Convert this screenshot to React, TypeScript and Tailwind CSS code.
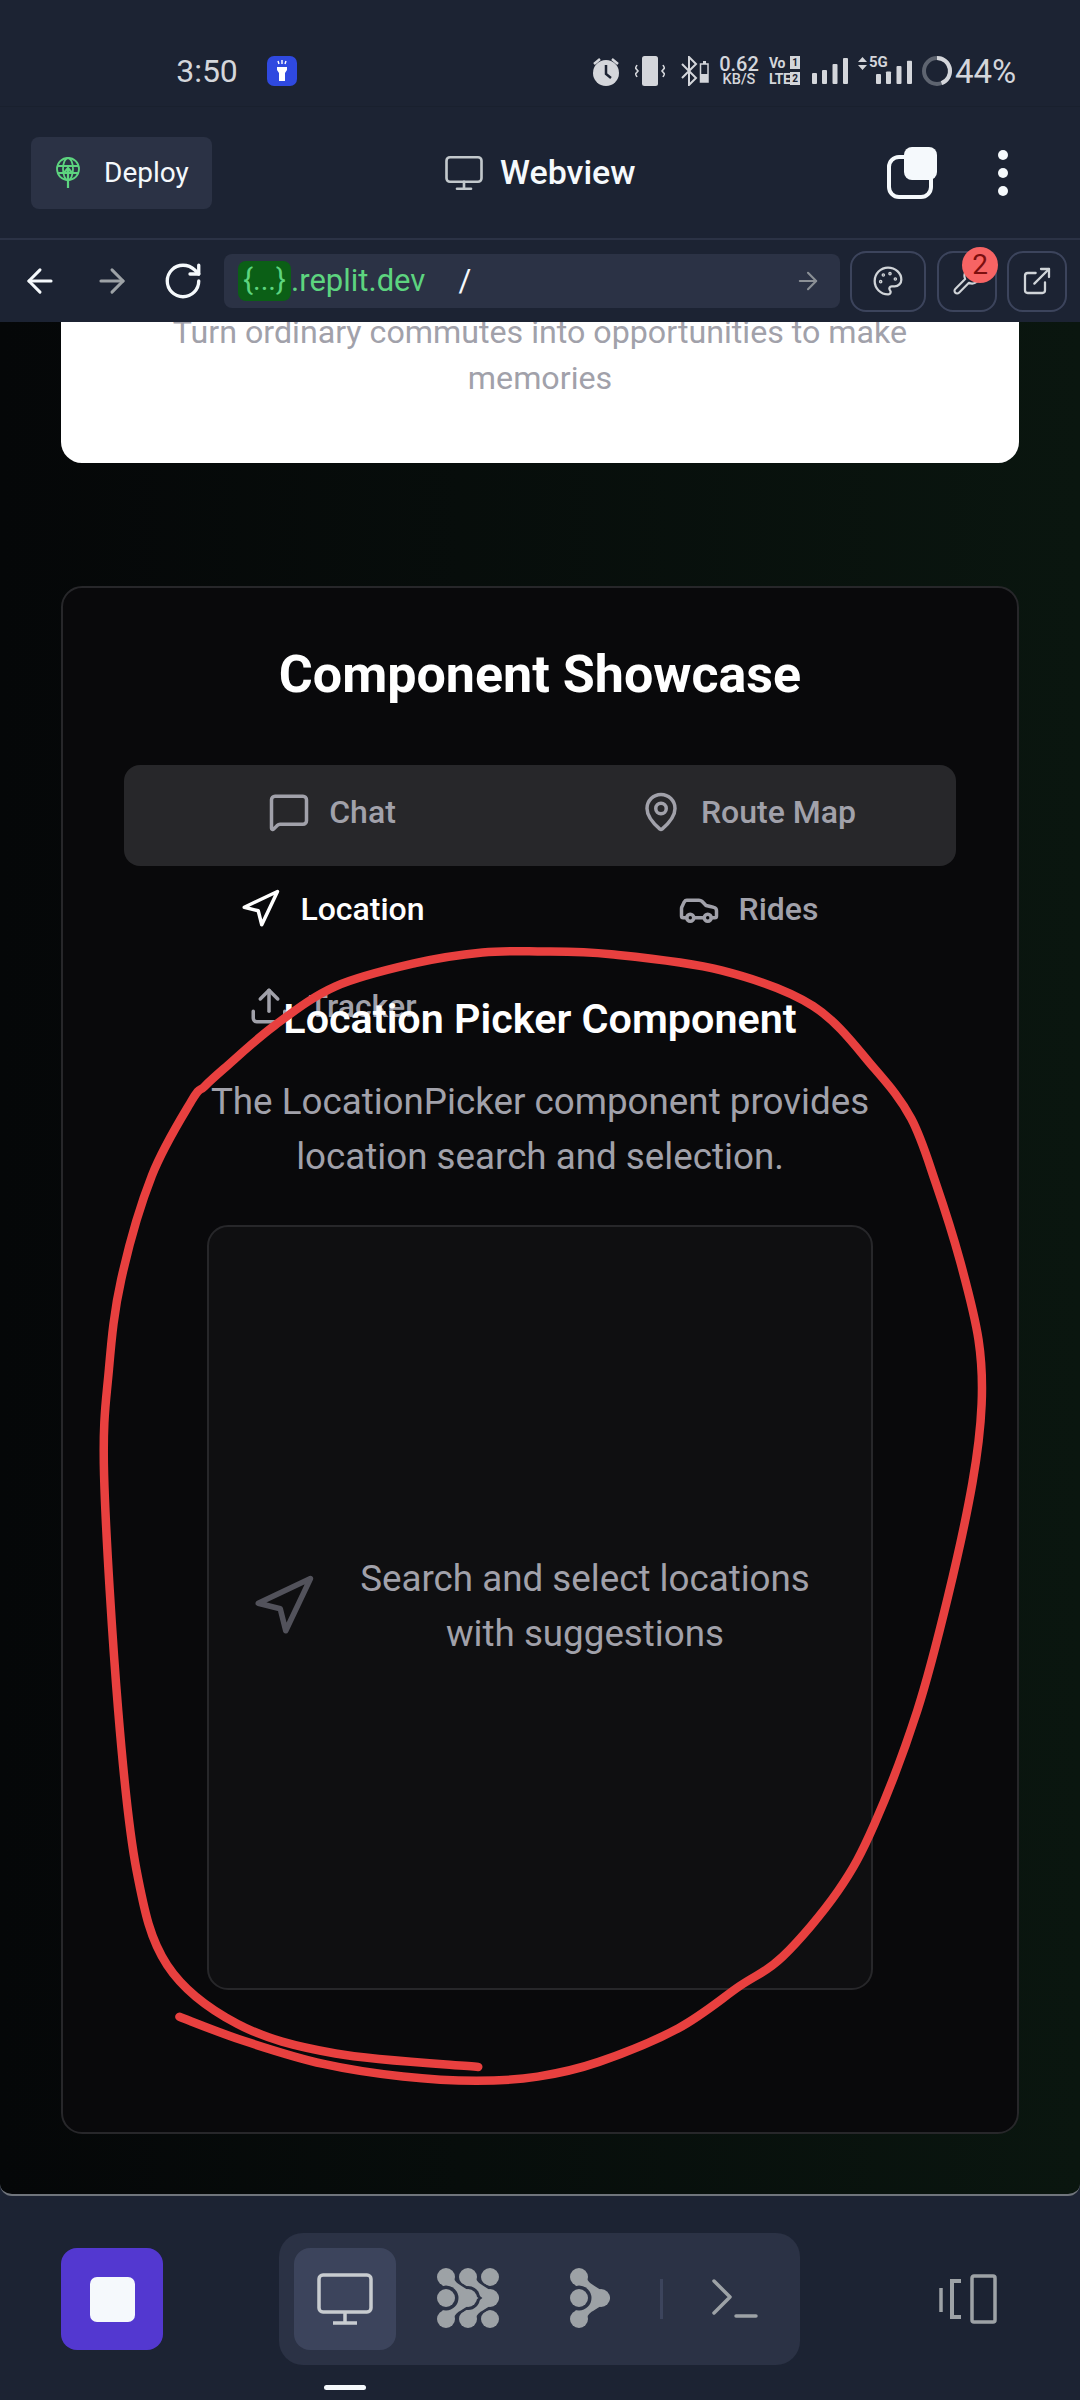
import React from "react";
import { ArrowLeft, ArrowRight, RotateCw, Palette, Wrench, ExternalLink, MessageSquare, MapPin, Navigation, Car, Upload, Monitor } from "lucide-react";

const top: [number, number][] = [[72,1500],[80,1200],[100,950],[150,660],[215,450],[236,410],[268,360],[350,240],[450,130],[580,65],[690,35],[780,32],[900,40],[1080,85],[1230,185],[1330,360],[1390,500],[1430,680],[1470,900],[1500,1120],[1505,1300],[1490,1520]];
const bot: [number, number][] = [[1450,230],[1400,500],[1330,770],[1270,930],[1180,1085],[1110,1155],[1010,1255],[880,1335],[780,1370],[680,1380],[560,1370],[430,1340],[300,1285],[195,1228]];
const start: [number, number][] = [[683,1347],[450,1315],[290,1245],[175,1105],[125,880],[95,500]];

const pts: [number, number][] = [
  ...start.map(([x, y]) => [60 + x / 1.633, 1500 + y / 2.376] as [number, number]),
  ...top.map(([x, y]) => [60 + x / 1.633, 940 + y / 2.8] as [number, number]),
  ...bot.map(([x, y]) => [60 + x / 1.633, 1500 + y / 2.376] as [number, number]),
];

function smooth(p: [number, number][]) {
  let d = `M${p[0][0]} ${p[0][1]}`;
  for (let i = 0; i < p.length - 1; i++) {
    const a = p[Math.max(0, i - 1)], b = p[i], c = p[i + 1], e = p[Math.min(p.length - 1, i + 2)];
    d += ` C${b[0] + (c[0] - a[0]) / 6} ${b[1] + (c[1] - a[1]) / 6} ${c[0] - (e[0] - b[0]) / 6} ${c[1] - (e[1] - b[1]) / 6} ${c[0]} ${c[1]}`;
  }
  return d;
}

function Bars() {
  return (
    <svg width="36" height="26" viewBox="0 0 36 26" fill="#d4d6db">
      <rect x="0" y="15" width="5" height="11" rx="1" />
      <rect x="10" y="12" width="5" height="14" rx="1" />
      <rect x="20.5" y="6" width="5" height="20" rx="1" />
      <rect x="31" y="0" width="5" height="26" rx="1" />
    </svg>
  );
}

function StatusBar() {
  return (
    <div className="h-[107px] shrink-0 border-b border-[#19202e] pt-[36px] pl-[175px] flex items-center text-[#d4d6db]">
      <span className="w-[64px] text-[32px] leading-none text-center">3:50</span>
      <div className="ml-[28px] w-[30px] h-[30px] rounded-[7px] bg-[#2f49e0] flex items-center justify-center">
        <svg width="16" height="24" viewBox="0 0 16 24" fill="#fff">
          <path d="M3 8h10v3l-2 3v8H5v-8L3 11z" />
          <path d="M8 1v4M4 2l1 3M12 2l-1 3" stroke="#fff" strokeWidth="1.4" />
        </svg>
      </div>
      <svg className="ml-[295px]" width="28" height="30" viewBox="0 0 28 30" fill="#d4d6db">
        <circle cx="14" cy="17" r="13" />
        <path d="M14 9v9l5 4" stroke="#1c2333" strokeWidth="2.5" fill="none" />
        <path d="M2 8l6-5M26 8l-6-5" stroke="#d4d6db" strokeWidth="2.5" />
      </svg>
      <svg className="ml-[15px]" width="30" height="30" viewBox="0 0 30 30">
        <rect x="7" y="0" width="16" height="30" rx="2.5" fill="#d4d6db" />
        <path d="M2 9l-1.500 3 2.500 3-2.500 3 1.500 3M28 9l1.500 3-2.500 3 2.500 3-1.500 3" stroke="#d4d6db" strokeWidth="1.600" fill="none" />
      </svg>
      <svg className="ml-[15px]" width="29" height="30" viewBox="0 0 29 30" fill="none">
        <path d="M2 8l14 14-7 7V1l7 7L2 22" stroke="#d4d6db" strokeWidth="2" />
        <rect x="20.500" y="8" width="7.500" height="18" stroke="#d4d6db" strokeWidth="1.500" />
        <rect x="20.500" y="18" width="7.500" height="8" fill="#d4d6db" />
        <rect x="23" y="5" width="3" height="3" fill="#d4d6db" />
      </svg>
      <div className="ml-[9px] w-[42px] flex flex-col items-center font-medium">
        <span className="text-[20px] leading-[17px]">0.62</span>
        <span className="text-[14.500px] leading-[13px]">KB/S</span>
      </div>
      <div className="ml-[9px] w-[31px] grid grid-cols-[21px_10px] text-[14px] font-bold leading-[14px] tracking-[-0.3px] gap-y-[2px]">
        <span>Vo</span>
        <span className="h-[13px] w-[10px] bg-[#d4d6db] text-[#1c2333] text-[10px] leading-[13px] text-center">1</span>
        <span>LTE</span>
        <span className="h-[13px] w-[10px] bg-[#d4d6db] text-[#1c2333] text-[10px] leading-[13px] text-center">2</span>
      </div>
      <div className="ml-[12px] flex"><Bars /></div>
      <svg className="ml-[10px] relative top-[-8px]" width="9" height="13" viewBox="0 0 9 13" fill="#d4d6db"><path d="M4.500 0L9 5H0zM4.500 13L0 8h9z" /></svg>
      <div className="ml-[2px] relative w-[42px] h-[30px]">
        <span className="absolute left-0 top-[-2px] text-[15px] font-bold leading-[16px]">5G</span>
        <div className="absolute right-[-1px] bottom-[2px] scale-y-[0.9] origin-bottom"><Bars /></div>
      </div>
      <svg className="ml-[10px]" width="32" height="32" viewBox="0 0 32 32" fill="none">
        <circle cx="16" cy="16" r="13" stroke="#5e6470" strokeWidth="4" />
        <path d="M16 3a13 13 0 0 1 4.500 25.200" stroke="#d4d6db" strokeWidth="4" />
      </svg>
      <span className="ml-[2px] text-[33px] leading-none">44%</span>
    </div>
  );
}

function HeaderRow() {
  return (
    <div className="h-[131px] shrink-0 flex items-center relative pl-[31px]">
      <div className="w-[181px] h-[72px] rounded-[8px] bg-[#2b3245] flex items-center pl-[25px] gap-[24px]">
        <svg width="24" height="31" viewBox="0 0 24 31" fill="none" stroke="#5dd47f" strokeWidth="1.800">
          <circle cx="12" cy="12" r="11" />
          <ellipse cx="12" cy="12" rx="5" ry="11" />
          <path d="M1 9h22M2 16h20" />
          <path d="M12 31V11M7 17l5-6 5 6" strokeWidth="2.200" />
        </svg>
        <span className="text-[28px] text-[#f5f9fc]">Deploy</span>
      </div>
      <div className="ml-[231px] flex items-center gap-[15px]">
        <Monitor size={42} color="#c2c8cc" strokeWidth={1.500} />
        <span className="text-[34px] font-medium text-[#f5f9fc]">Webview</span>
      </div>
      <svg className="ml-[251px]" width="50" height="52" viewBox="0 0 50 52" fill="none">
        <rect x="2" y="10" width="42" height="40" rx="10" stroke="#f5f9fc" strokeWidth="4" />
        <rect x="17" y="0" width="33" height="33" rx="8" fill="#f5f9fc" />
      </svg>
      <div className="ml-[61px] flex flex-col gap-[8px]">
        <span className="w-[10px] h-[10px] rounded-full bg-[#f5f9fc]" />
        <span className="w-[10px] h-[10px] rounded-full bg-[#f5f9fc]" />
        <span className="w-[10px] h-[10px] rounded-full bg-[#f5f9fc]" />
      </div>
    </div>
  );
}

function UrlRow() {
  return (
    <div className="h-[84px] shrink-0 border-t-2 border-[#2b3245] flex items-center pl-[21px]">
      <ArrowLeft size={38} color="#f5f9fc" strokeWidth={1.900} />
      <ArrowRight size={38} color="#9da2a6" strokeWidth={1.900} className="ml-[34px]" />
      <RotateCw size={42} color="#f5f9fc" strokeWidth={1.900} className="ml-[31px]" />
      <div className="ml-[20px] w-[616px] h-[54px] rounded-[8px] bg-[#2b3245] flex items-center pl-[14px] pr-[18px]">
        <span className="h-[40px] w-[53px] rounded-[8px] bg-[#0b5f16] text-[#5dd47f] text-[29px] leading-[38px] text-center">{"{...}"}</span>
        <span className="text-[#5dd47f] text-[31px]">.replit.dev</span>
        <span className="ml-[33px] text-[#f5f9fc] text-[31px]">/</span>
        <ArrowRight size={28} color="#8b9096" strokeWidth={1.800} className="ml-auto" />
      </div>
      <button className="ml-[10px] w-[76px] h-[61px] rounded-[16px] border-2 border-[#3c445c] flex items-center justify-center">
        <Palette size={32} color="#d0d4d8" strokeWidth={1.700} />
      </button>
      <button className="ml-[11px] w-[60px] h-[61px] rounded-[16px] border-2 border-[#3c445c] flex items-center justify-center relative">
        <Wrench size={30} color="#d0d4d8" strokeWidth={1.700} />
        <span className="absolute left-[23px] top-[-6px] w-[36px] h-[36px] rounded-full bg-[#f76464] text-[#7c0f0f] text-[28px] leading-[36px] text-center">2</span>
      </button>
      <button className="ml-[10px] w-[60px] h-[61px] rounded-[16px] border-2 border-[#3c445c] flex items-center justify-center">
        <ExternalLink size={32} color="#d0d4d8" strokeWidth={1.700} />
      </button>
    </div>
  );
}

function Tab({ icon, label, active }: { icon: React.ReactNode; label: string; active?: boolean }) {
  return (
    <div className={`flex items-center justify-center gap-[19px] h-[80px] text-[32px] font-medium ${active ? "text-white" : "text-[#a1a1aa]"}`}>
      {icon}
      <span>{label}</span>
    </div>
  );
}

function Main() {
  return (
    <div className="h-[1874px] shrink-0 overflow-hidden rounded-b-[12px] border-b-2 border-[#70757c] bg-gradient-to-r from-[#050708] to-[#0a160f]">
      <div className="mt-[-13px] mx-[61px] h-[154px] rounded-b-[21px] bg-white text-center text-[#a1a1aa] text-[32.200px] leading-[46px]">
        <p>Turn ordinary commutes into opportunities to make</p>
        <p>memories</p>
      </div>
      <div className="mt-[123px] mx-[61px] h-[1548px] rounded-[21px] border-2 border-[#27272a] bg-[#09090b] px-[61px] pt-[52px]">
        <h2 className="text-center text-white text-[52px] leading-[70px] font-bold">Component Showcase</h2>
        <div className="mt-[55px] h-[101px] rounded-[16px] bg-[#27272a] pt-[7px] grid grid-cols-2 gap-y-[17px] content-start">
          <Tab icon={<MessageSquare size={42} strokeWidth={2} />} label="Chat" />
          <Tab icon={<MapPin size={42} strokeWidth={2} />} label="Route Map" />
          <Tab icon={<Navigation size={42} strokeWidth={2} />} label="Location" active />
          <Tab icon={<Car size={42} strokeWidth={2} />} label="Rides" />
          <Tab icon={<Upload size={42} strokeWidth={2} />} label="Tracker" />
        </div>
        <h3 className="mt-[126px] text-center text-white text-[41.300px] leading-[55px] font-semibold">Location Picker Component</h3>
        <p className="mt-[27px] text-center text-[#a1a1aa] text-[36.750px] leading-[55px]">
          The LocationPicker component provides<br />location search and selection.
        </p>
        <div className="mt-[41px] mx-[83px] h-[765px] pb-[3px] rounded-[21px] border-2 border-[#27272a] bg-[#0f0f11] flex items-center justify-center">
          <Navigation size={66} color="#52525b" strokeWidth={2} className="mr-[24px] shrink-0" />
          <p className="w-[490px] text-center text-[#a1a1aa] text-[36.750px] leading-[55px]">Search and select locations with suggestions</p>
        </div>
      </div>
    </div>
  );
}

const chevronPath = (dx: number) => `M${dx + 9} 9 C${dx + 13} 22 ${dx + 21} 22 ${dx + 31} 30 C${dx + 21} 38 ${dx + 13} 38 ${dx + 9} 51`;

function Chevron({ dx }: { dx: number }) {
  return (
    <g>
      <path d={chevronPath(dx)} stroke="#2b3245" strokeWidth="18" fill="none" />
      <circle cx={dx + 31} cy="30" r="12" fill="#2b3245" />
      <path d={chevronPath(dx)} stroke="#9da2a6" strokeWidth="13" strokeLinecap="round" fill="none" />
      <circle cx={dx + 9} cy="9" r="9" fill="#9da2a6" />
      <circle cx={dx + 9} cy="51" r="9" fill="#9da2a6" />
      <circle cx={dx + 31} cy="30" r="9" fill="#9da2a6" />
    </g>
  );
}

function BottomBar() {
  return (
    <div className="flex-1 flex flex-col">
      <div className="flex items-start pl-[61px] pt-[37px]">
        <div className="mt-[15px] w-[102px] h-[102px] rounded-[16px] bg-[#5338d0] flex items-center justify-center">
          <div className="w-[45px] h-[45px] rounded-[7px] bg-[#f5f9fc]" />
        </div>
        <div className="ml-[116px] w-[521px] h-[132px] rounded-[24px] bg-[#2b3245] flex items-center pl-[15px] relative">
          <div className="w-[102px] h-[102px] rounded-[16px] bg-[#3c445c] flex items-center justify-center">
            <svg width="56" height="52" viewBox="0 0 56 52" fill="none" stroke="#c8ccd0" strokeWidth="3.500">
              <rect x="2" y="2" width="52" height="37" rx="4" />
              <path d="M28 39v10M16 50h24" />
            </svg>
          </div>
          <svg className="ml-[41px]" width="62" height="62" viewBox="0 0 62 62">
            <circle cx="53" cy="9" r="9" fill="#9da2a6" />
            <circle cx="53" cy="51" r="9" fill="#9da2a6" />
            <Chevron dx={22} />
            <Chevron dx={0} />
            <circle cx="9" cy="30" r="12.500" fill="#2b3245" />
            <circle cx="9" cy="30" r="9" fill="#9da2a6" />
          </svg>
          <svg className="ml-[71px]" width="40" height="62" viewBox="0 0 40 62">
            <Chevron dx={0} />
            <circle cx="9" cy="30" r="12.500" fill="#2b3245" />
            <circle cx="9" cy="30" r="9" fill="#9da2a6" />
          </svg>
          <div className="ml-[50px] w-[3px] h-[40px] bg-[#3c445c]" />
          <svg className="ml-[49px]" width="46" height="40" viewBox="0 0 46 40" fill="none" stroke="#9da2a6" strokeWidth="3.500" strokeLinecap="round" strokeLinejoin="round">
            <path d="M2 2l16 16-16 16" />
            <path d="M24 37h20" />
          </svg>
        </div>
        <svg className="ml-[139px] mt-[41px]" width="58" height="50" viewBox="0 0 58 50" fill="none" stroke="#9da2a6" strokeWidth="3.500">
          <rect x="33" y="2" width="23" height="46" rx="2" />
          <path d="M22 7h-9v36h9" strokeWidth="4" />
          <path d="M2 14v24" />
        </svg>
      </div>
      <div className="mt-auto mb-[10px] ml-[324px] w-[42px] h-[5px] rounded-full bg-[#f5f9fc]" />
    </div>
  );
}

export default function App() {
  return (
    <div className="w-[1080px] h-[2400px] relative overflow-hidden flex flex-col bg-[#1c2333] font-['Roboto',sans-serif]">
      <StatusBar />
      <HeaderRow />
      <UrlRow />
      <Main />
      <BottomBar />
      <svg className="absolute left-0 top-0 pointer-events-none" width="1080" height="2400" viewBox="0 0 1080 2400" fill="none">
        <path d={smooth(pts)} stroke="#e8403f" strokeWidth="8.500" strokeLinecap="round" strokeLinejoin="round" />
      </svg>
    </div>
  );
}
